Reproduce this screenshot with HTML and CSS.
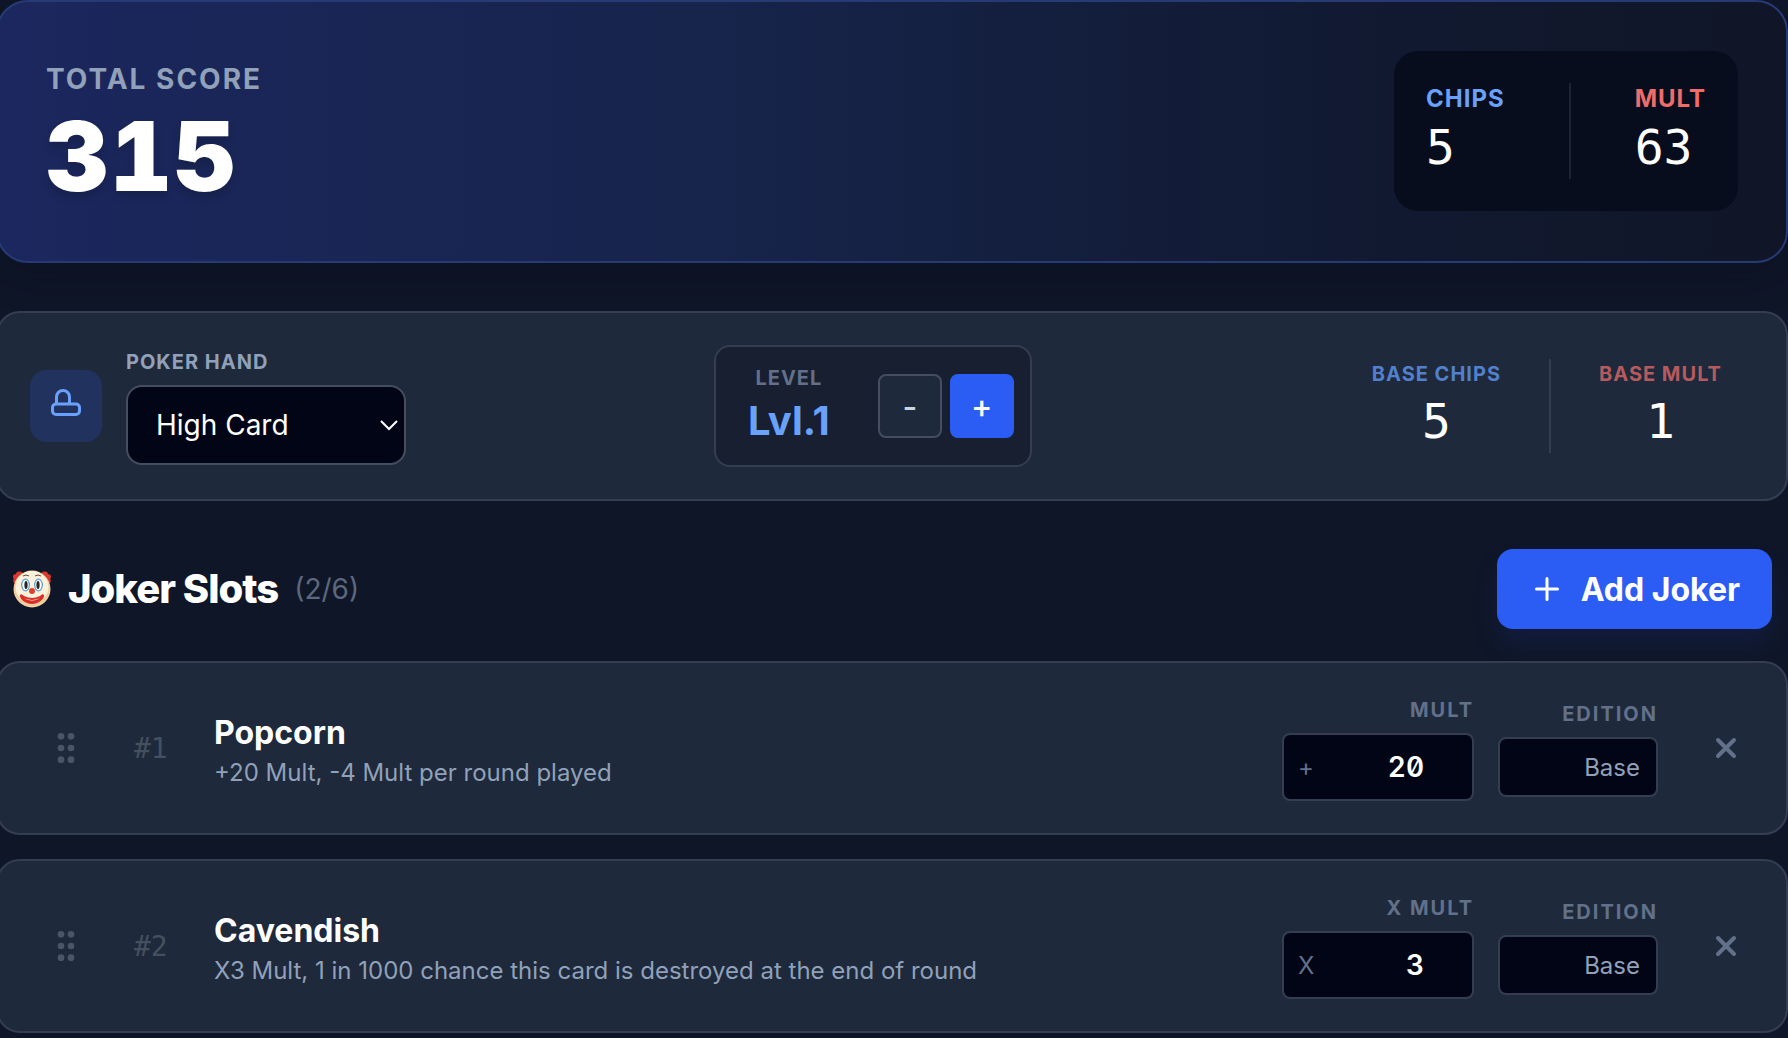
FILE: index.html
```
<!DOCTYPE html>
<html lang="en">
<head>
    <meta charset="UTF-8">
    <meta name="viewport" content="width=device-width, initial-scale=1.0">
    <title>Joker Score Calculator</title>
    <link rel="stylesheet" href="styles.css">
</head>
<body>
    <main class="app">
        <section class="score-card">
            <div class="total">
                <div class="total-label">TOTAL SCORE</div>
                <div class="total-value">315</div>
            </div>
            <div class="score-parts">
                <div class="part">
                    <div class="part-label chips">CHIPS</div>
                    <div class="stat-value">5</div>
                </div>
                <div class="divider"></div>
                <div class="part">
                    <div class="part-label mult">MULT</div>
                    <div class="stat-value">63</div>
                </div>
            </div>
        </section>

        <section class="card hand-card">
            <div class="hand">
                <div class="hand-icon">
                    <svg width="36" height="36" viewBox="0 0 36 36" fill="none" stroke="currentColor" stroke-width="3">
                        <path d="M8.500 16V9a6.500 6.500 0 0 1 13 0V16"/>
                        <rect x="4.500" y="16" width="27" height="10.500" rx="3.500"/>
                    </svg>
                </div>
                <div class="hand-field">
                    <label class="small-label" for="hand">POKER HAND</label>
                    <div class="select-wrap">
                        <select id="hand" class="hand-select">
                            <option>High Card</option>
                            <option>Pair</option>
                            <option>Two Pair</option>
                            <option>Flush</option>
                        </select>
                        <svg class="chevron" width="20" height="12" viewBox="0 0 20 12" fill="none" stroke="currentColor" stroke-width="2">
                            <path d="M2 2l8 8 8-8"/>
                        </svg>
                    </div>
                </div>
            </div>

            <div class="level">
                <div class="level-info">
                    <div class="small-label dim">LEVEL</div>
                    <div class="level-value">Lvl.1</div>
                </div>
                <div class="level-buttons">
                    <button class="step" type="button">-</button>
                    <button class="step step-up" type="button">+</button>
                </div>
            </div>

            <div class="base">
                <div class="base-stat">
                    <div class="small-label base-chips">BASE CHIPS</div>
                    <div class="stat-value">5</div>
                </div>
                <div class="divider"></div>
                <div class="base-stat">
                    <div class="small-label base-mult">BASE MULT</div>
                    <div class="stat-value">1</div>
                </div>
            </div>
        </section>

        <header class="slots-header">
            <svg class="clown" width="40" height="40" viewBox="0 0 40 40">
                <!-- hair -->
                <path d="M11 4C7 1 4 3 4 5C1 5 0 8 2 10C0 12 2 15 5 15L12 8z" fill="#d8382f"/>
                <path d="M29 4C33 1 36 3 36 5C39 5 40 8 38 10C40 12 38 15 35 15L28 8z" fill="#d8382f"/>
                <circle cx="20" cy="20" r="18.500" fill="#f0cfa0"/>
                <ellipse cx="20" cy="18" rx="16.500" ry="16" fill="#fdf1dc"/>
                <!-- eyes -->
                <ellipse cx="13.500" cy="16" rx="4.500" ry="6.500" fill="#5fa5d8"/>
                <ellipse cx="26.500" cy="16" rx="4.500" ry="6.500" fill="#5fa5d8"/>
                <ellipse cx="13.500" cy="16" rx="3.200" ry="5.200" fill="#fff"/>
                <ellipse cx="26.500" cy="16" rx="3.200" ry="5.200" fill="#fff"/>
                <ellipse cx="14" cy="16" rx="1.600" ry="4" fill="#2b2424"/>
                <ellipse cx="26" cy="16" rx="1.600" ry="4" fill="#2b2424"/>
                <path d="M11 7q3-2 6 0M23 7q3-2 6 0" fill="none" stroke="#6a4a35"/>
                <!-- nose and mouth -->
                <circle cx="20" cy="22" r="3" fill="#e0402f"/>
                <path d="M8 26C7 29 13 35 20 35S33 29 32 26C31 24 29 26 28 27Q20 31 12 27C11 26 9 24 8 26z" fill="#d92e26"/>
                <path d="M12 29Q20 33 28 29Q20 34 12 29z" fill="#fff"/>
            </svg>
            <h2 class="slots-title">Joker Slots</h2>
            <span class="slots-count">(2/6)</span>
            <button class="add-button" type="button">
                <svg width="36" height="36" viewBox="0 0 24 24" fill="none" stroke="currentColor" stroke-width="2" stroke-linecap="round">
                    <path d="M5 12h14M12 5v14"/>
                </svg>
                Add Joker
            </button>
        </header>

        <div class="jokers">
            <article class="card joker">
                <div class="grip">
                    <svg width="40" height="40" viewBox="0 0 24 24" fill="currentColor">
                        <circle cx="9" cy="5" r="2"/><circle cx="15" cy="5" r="2"/>
                        <circle cx="9" cy="12" r="2"/><circle cx="15" cy="12" r="2"/>
                        <circle cx="9" cy="19" r="2"/><circle cx="15" cy="19" r="2"/>
                    </svg>
                </div>
                <div class="joker-index">#1</div>
                <div class="joker-info">
                    <h3 class="joker-name">Popcorn</h3>
                    <p class="joker-desc">+20 Mult, -4 Mult per round played</p>
                </div>
                <div class="joker-fields">
                    <div class="field">
                        <label class="field-label" for="mult-1">MULT</label>
                        <div class="number-box">
                            <span class="prefix">+</span>
                            <input id="mult-1" class="number-input" type="number" value="20">
                        </div>
                    </div>
                    <div class="field">
                        <label class="field-label" for="edition-1">EDITION</label>
                        <select id="edition-1" class="edition-select">
                            <option>Base</option>
                            <option>Foil</option>
                            <option>Holo</option>
                        </select>
                    </div>
                </div>
                <button class="remove" type="button" aria-label="Remove Popcorn">
                    <svg width="32" height="32" viewBox="0 0 24 24" fill="none" stroke="currentColor" stroke-width="3" stroke-linecap="round">
                        <path d="M18 6L6 18M6 6l12 12"/>
                    </svg>
                </button>
            </article>

            <article class="card joker">
                <div class="grip">
                    <svg width="40" height="40" viewBox="0 0 24 24" fill="currentColor">
                        <circle cx="9" cy="5" r="2"/><circle cx="15" cy="5" r="2"/>
                        <circle cx="9" cy="12" r="2"/><circle cx="15" cy="12" r="2"/>
                        <circle cx="9" cy="19" r="2"/><circle cx="15" cy="19" r="2"/>
                    </svg>
                </div>
                <div class="joker-index">#2</div>
                <div class="joker-info">
                    <h3 class="joker-name">Cavendish</h3>
                    <p class="joker-desc">X3 Mult, 1 in 1000 chance this card is destroyed at the end of round</p>
                </div>
                <div class="joker-fields">
                    <div class="field">
                        <label class="field-label" for="mult-2">X MULT</label>
                        <div class="number-box">
                            <span class="prefix">X</span>
                            <input id="mult-2" class="number-input" type="number" value="3">
                        </div>
                    </div>
                    <div class="field">
                        <label class="field-label" for="edition-2">EDITION</label>
                        <select id="edition-2" class="edition-select">
                            <option>Base</option>
                            <option>Foil</option>
                            <option>Holo</option>
                        </select>
                    </div>
                </div>
                <button class="remove" type="button" aria-label="Remove Cavendish">
                    <svg width="32" height="32" viewBox="0 0 24 24" fill="none" stroke="currentColor" stroke-width="3" stroke-linecap="round">
                        <path d="M18 6L6 18M6 6l12 12"/>
                    </svg>
                </button>
            </article>
        </div>
    </main>
</body>
</html>
```
FILE: styles.css
```
* {
    box-sizing: border-box;
}

body {
    margin: 0;
    background-color: #0f1628;
    color: #fff;
    font-family: Inter, "Liberation Sans", sans-serif;
}

button, select, input {
    font-family: inherit;
}

h2, h3, p {
    margin: 0;
}

svg {
    display: block;
}

.app {
    margin-left: -4px;
}

/* Total score */
.score-card {
    display: flex;
    justify-content: space-between;
    align-items: center;
    padding: 49px 48px 50px;
    border: 2px solid #263a75;
    border-radius: 32px;
    background: linear-gradient(to right, #1b275e, #17244b 40%, #111a32 75%, #101627);
    box-shadow: 0 16px 32px rgba(8, 14, 24, 0.3);
}

.total {
    display: flex;
    flex-direction: column;
    gap: 8px;
}

.total-label {
    font-size: 28px;
    font-weight: 700;
    line-height: 42px;
    letter-spacing: 2px;
    color: #90a1b9;
}

.total-value {
    font-size: 96px;
    font-weight: 900;
    line-height: 96px;
    letter-spacing: 2px;
    font-variant-numeric: tabular-nums;
    text-shadow: 0 6px 8px rgba(0, 0, 0, 0.15);
}

.score-parts {
    display: flex;
    gap: 64px;
    padding: 32px;
    border-radius: 24px;
    background-color: #080d1e;
}

.part-label {
    font-size: 24px;
    font-weight: 700;
    line-height: 32px;
    letter-spacing: 1px;
}

.chips {
    color: #69a1fb;
}

.mult {
    color: #ee6d6b;
}

.stat-value {
    font-family: "DejaVu Sans Mono", monospace;
    font-size: 48px;
    line-height: 64px;
}

.divider {
    width: 2px;
    background-color: #343e52;
}

.score-parts .divider {
    background-color: #1d2436;
}

/* Poker hand */
.card {
    border: 2px solid #343e52;
    border-radius: 24px;
    background-color: #1e293b;
}

.hand-card {
    display: flex;
    justify-content: space-between;
    align-items: center;
    margin-top: 48px;
    padding: 32px;
}

.hand {
    display: flex;
    align-items: center;
    gap: 24px;
}

.hand-icon {
    display: flex;
    justify-content: center;
    align-items: center;
    width: 72px;
    height: 72px;
    border-radius: 16px;
    background-color: #22325f;
    color: #69a1fb;
}

.hand-field {
    display: flex;
    flex-direction: column;
    gap: 8px;
}

.small-label {
    font-size: 20px;
    font-weight: 700;
    line-height: 30px;
    letter-spacing: 1px;
    color: #90a1b9;
}

.dim {
    color: #62708a;
}

.select-wrap {
    position: relative;
}

.hand-select {
    appearance: none;
    display: block;
    width: 280px;
    height: 80px;
    padding: 0 48px 0 28px;
    border: 2px solid #454e61;
    border-radius: 16px;
    background-color: #020515;
    color: #fff;
    font-size: 28px;
}

.chevron {
    position: absolute;
    top: 34px;
    right: 7px;
    pointer-events: none;
}

.level {
    display: flex;
    align-items: center;
    gap: 32px;
    padding: 16px;
    border: 2px solid #343e52;
    border-radius: 16px;
    background-color: #171f30;
}

.level-info {
    padding: 0 16px;
    text-align: center;
}

.level-value {
    font-size: 40px;
    font-weight: 700;
    line-height: 56px;
    color: #69a1fb;
}

.level-buttons {
    display: flex;
    gap: 8px;
}

.step {
    width: 64px;
    height: 64px;
    padding: 0;
    border: 2px solid #454e61;
    border-radius: 8px;
    background-color: #1e293b;
    color: #cad5e2;
    font-size: 32px;
    font-weight: 500;
    cursor: pointer;
}

.step-up {
    border-color: #2b5df4;
    background-color: #2b5df4;
    color: #fff;
}

.base {
    display: flex;
    gap: 48px;
    padding: 0 32px;
}

.base-stat {
    text-align: center;
}

.base-chips {
    color: #5280cc;
}

.base-mult {
    color: #b65a5e;
}

/* Joker slots */
.slots-header {
    display: flex;
    align-items: center;
    gap: 16px;
    margin: 48px 0 32px;
    padding: 0 16px;
}

.slots-title {
    font-size: 40px;
    font-weight: 800;
    line-height: 56px;
    letter-spacing: -1px;
}

.slots-count {
    font-size: 28px;
    color: #5d687c;
}

.add-button {
    display: flex;
    align-items: center;
    gap: 16px;
    height: 80px;
    margin-left: auto;
    padding: 0 32px;
    border: none;
    border-radius: 16px;
    background-color: #2b5df4;
    box-shadow: 0 16px 24px rgba(28, 57, 142, 0.2);
    color: #fff;
    font-size: 32px;
    font-weight: 700;
    cursor: pointer;
}

.jokers {
    display: flex;
    flex-direction: column;
    gap: 24px;
}

.joker {
    display: flex;
    align-items: center;
    gap: 32px;
    padding: 32px;
}

.grip {
    padding: 0 16px;
    color: #4a5568;
}

.joker-index {
    width: 48px;
    font-family: "DejaVu Sans Mono", monospace;
    font-size: 28px;
    color: #45505f;
}

.joker-info {
    flex: 1;
    padding-top: 2px;
}

.joker-name {
    font-size: 32px;
    font-weight: 700;
    line-height: 48px;
}

.joker-desc {
    font-size: 24px;
    line-height: 32px;
    color: #90a1b9;
}

.joker-fields {
    display: flex;
    align-items: center;
    gap: 24px;
}

.field {
    display: flex;
    flex-direction: column;
    align-items: flex-end;
    gap: 8px;
}

.field-label {
    font-size: 20px;
    font-weight: 700;
    line-height: 30px;
    letter-spacing: 2px;
    color: #62708a;
}

.number-box {
    display: flex;
    align-items: center;
    width: 192px;
    height: 68px;
    padding: 0 48px 0 14px;
    border: 2px solid #343e52;
    border-radius: 8px;
    background-color: #020515;
}

.prefix {
    font-size: 24px;
    color: #62708a;
}

.number-input {
    appearance: textfield;
    flex: 1;
    min-width: 0;
    padding: 0;
    border: none;
    background: none;
    color: #fff;
    font-size: 28px;
    font-weight: 600;
    font-feature-settings: "tnum", "zero";
    text-align: right;
}

.number-input::-webkit-inner-spin-button {
    appearance: none;
    margin: 0;
}

.edition-select {
    appearance: none;
    width: 160px;
    height: 60px;
    padding: 0 16px;
    border: 2px solid #343e52;
    border-radius: 8px;
    background-color: #020515;
    color: #90a1b9;
    font-size: 24px;
    text-align-last: right;
}

.remove {
    margin-left: 8px;
    padding: 12px;
    border: none;
    background: none;
    color: #62708a;
    cursor: pointer;
}
```
